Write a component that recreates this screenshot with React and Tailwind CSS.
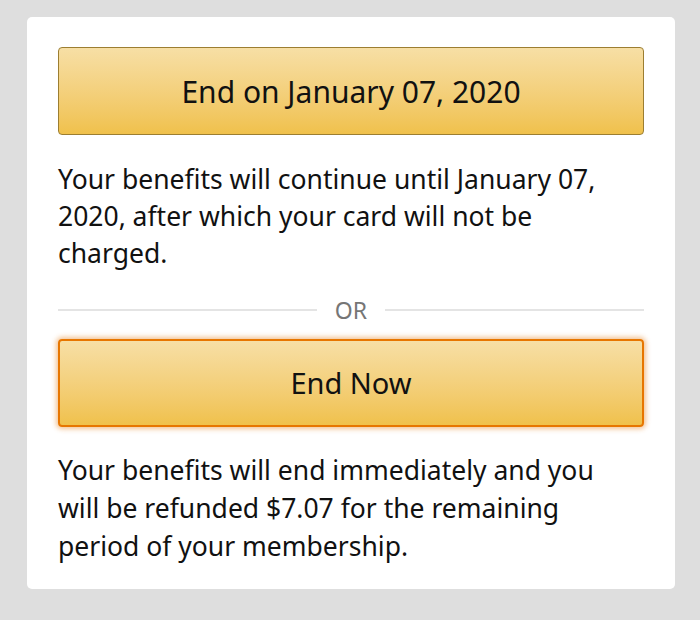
export default function App() {
    return (
        <div className="min-h-screen bg-[#dedede] pt-[17px] pl-[27px]" style={{ fontFamily: '"Noto Sans", "Open Sans", sans-serif' }}>
            <div className="w-[648px] h-[572px] bg-white rounded-[5px] pt-[30px] px-[31px]">
                <button className="w-full h-[88px] rounded-[4px] border border-[#9c7e31] bg-gradient-to-b from-[#f7dfa5] to-[#f0c14b] text-[30px] text-[#111]">
                    End on January 07, 2020
                </button>

                <p className="mt-[26px] w-[572px] text-[26.5px] leading-[37px] text-[#111]">
                    Your benefits will continue until January 07, 2020, after which your card will not be charged.
                </p>

                <div className="mt-[23px] flex items-center gap-[18px]">
                    <div className="flex-1 h-[2px] bg-[#e4e4e4]" />
                    <span className="text-[23px] leading-[30px] text-[#767676]">OR</span>
                    <div className="flex-1 h-[2px] bg-[#e4e4e4]" />
                </div>

                <button className="mt-[14px] w-full h-[88px] rounded-[4px] border-2 border-[#e77600] bg-gradient-to-b from-[#f7dfa5] to-[#f0c14b] text-[29px] text-[#111] shadow-[0_0_5px_2px_rgba(228,121,17,0.45)]">
                    End Now
                </button>

                <p className="mt-[24px] w-[572px] text-[26.5px] leading-[38px] text-[#111]">
                    Your benefits will end immediately and you will be refunded $7.07 for the remaining period of your membership.
                </p>
            </div>
        </div>
    )
}
